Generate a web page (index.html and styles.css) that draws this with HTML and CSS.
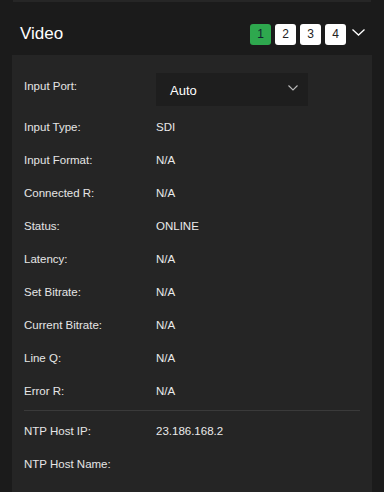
FILE: index.html
```html
<!DOCTYPE html>
<html>
<head>
<meta charset="utf-8">
<link rel="stylesheet" href="styles.css">
</head>
<body>
<div class="topedge"></div>
<header class="head">
  <h1 class="title">Video</h1>
  <div class="tabs">
    <span class="tab active">1</span>
    <span class="tab">2</span>
    <span class="tab">3</span>
    <span class="tab">4</span>
    <svg class="chev" width="13" height="7" viewBox="0 0 13 7"><path d="M0.5 0.5 L6.5 6 L12.5 0.5" fill="none" stroke="#fff" stroke-width="1.3"/></svg>
  </div>
</header>
<section class="panel">
  <div class="row first">
    <span class="label">Input Port:</span>
    <div class="select">
      <span>Auto</span>
      <svg width="10" height="6" viewBox="0 0 10 6"><path d="M0.5 0.5 L5 5 L9.5 0.5" fill="none" stroke="#bbb" stroke-width="1.1"/></svg>
    </div>
  </div>
  <div class="row"><span class="label">Input Type:</span><span class="value">SDI</span></div>
  <div class="row"><span class="label">Input Format:</span><span class="value">N/A</span></div>
  <div class="row"><span class="label">Connected R:</span><span class="value">N/A</span></div>
  <div class="row"><span class="label">Status:</span><span class="value">ONLINE</span></div>
  <div class="row"><span class="label">Latency:</span><span class="value">N/A</span></div>
  <div class="row"><span class="label">Set Bitrate:</span><span class="value">N/A</span></div>
  <div class="row"><span class="label">Current Bitrate:</span><span class="value">N/A</span></div>
  <div class="row"><span class="label">Line Q:</span><span class="value">N/A</span></div>
  <div class="row"><span class="label">Error R:</span><span class="value">N/A</span></div>
  <hr class="divider">
  <div class="row"><span class="label">NTP Host IP:</span><span class="value">23.186.168.2</span></div>
  <div class="row"><span class="label">NTP Host Name:</span><span class="value"></span></div>
</section>
</body>
</html>
```
FILE: styles.css
```css
* { box-sizing: border-box; }
html, body { margin: 0; padding: 0; }
body {
  background: #1b1b1b;
  width: 384px;
  height: 492px;
  overflow: hidden;
  font-family: "Liberation Sans", Arial, sans-serif;
  color: #e8e8e8;
}
.topedge {
  height: 2px;
  margin: 0 13px;
  background: #262626;
}
.head {
  height: 53px;
  display: flex;
  align-items: center;
  justify-content: space-between;
  padding: 10px 19px 0 20px;
}
.title {
  margin: 0;
  font-size: 17px;
  font-weight: normal;
  color: #fff;
  line-height: 1;
  margin-top: -1px;
}
.tabs {
  display: flex;
  align-items: center;
  gap: 4px;
  margin-top: 1px;
}
.tab {
  width: 21px;
  height: 21px;
  border-radius: 3px;
  background: #fff;
  color: #222;
  font-size: 12px;
  display: flex;
  align-items: center;
  justify-content: center;
}
.tab.active {
  background: #2ea84e;
  color: #123;
}
.chev { margin-left: 2px; margin-top: -4px; }
.panel {
  margin: 0 12px;
  background: #252525;
  padding: 18px 12px 0;
  height: 440px;
}
.row {
  height: 33px;
  display: flex;
  align-items: center;
  font-size: 11.5px;
}
.row.first {
  height: 37px;
  align-items: flex-start;
}
.row.first .label { padding-top: 7px; }
.label {
  width: 132px;
  color: #e6e6e6;
}
.value { color: #eaeaea; }
.select {
  width: 152px;
  height: 33px;
  background: #1e1e1e;
  display: flex;
  align-items: center;
  justify-content: space-between;
  padding: 0 10px 0 14px;
  font-size: 13px;
  color: #fff;
}
.select span { margin-top: 2px; }
.select svg { margin-top: -4px; }
.divider {
  border: 0;
  height: 1px;
  background: #3a3a3a;
  margin: 3px 0 3px;
}
```
